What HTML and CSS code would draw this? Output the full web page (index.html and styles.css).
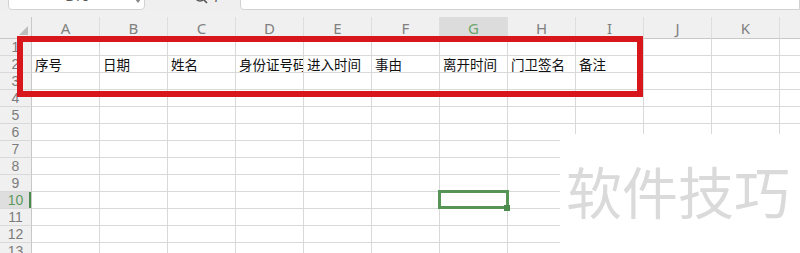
FILE: index.html
```html
<!DOCTYPE html>
<html lang="zh-CN">
<head>
  <meta charset="UTF-8">
  <meta name="viewport" content="width=device-width, initial-scale=1.0">
  <title>门卫登记表</title>
  <link rel="stylesheet" href="styles.css">
</head>
<body>
  <div class="toolbar">
    <div class="namebox">
      G10
      <svg class="caret" width="6" height="4" viewBox="0 0 6 4"><path d="M0 0 L6 0 L3 4 Z" fill="#888"/></svg>
    </div>
    <div class="fx-tools">
      <svg class="search" width="16" height="16" viewBox="0 0 16 16">
        <circle cx="7" cy="6" r="5" fill="none" stroke="#555" stroke-width="1.4"/>
        <path d="M10.5 9.5 L14 13" stroke="#555" stroke-width="1.6"/>
      </svg>
      <span class="fx">fx</span>
    </div>
    <div class="formula"></div>
  </div>

  <div class="sheet">
    <div class="row head">
      <div class="rh corner"><span class="tri"></span></div>
      <div class="ch">A</div>
      <div class="ch">B</div>
      <div class="ch">C</div>
      <div class="ch">D</div>
      <div class="ch">E</div>
      <div class="ch">F</div>
      <div class="ch active">G</div>
      <div class="ch">H</div>
      <div class="ch">I</div>
      <div class="ch">J</div>
      <div class="ch">K</div>
      <div class="ch"></div>
    </div>
    <div id="rows"></div>

    <div class="mark-box"></div>
    <div class="blank">
      <span class="watermark">软件技巧</span>
    </div>
  </div>

  <script>
    const headers = ['序号', '日期', '姓名', '身份证号码', '进入时间', '事由', '离开时间', '门卫签名', '备注'];
    const rows = document.getElementById('rows');
    for (let r = 1; r <= 13; r++) {
      const row = document.createElement('div');
      row.className = 'row';
      const rh = document.createElement('div');
      rh.className = r === 10 ? 'rh active' : 'rh';
      rh.textContent = r;
      row.appendChild(rh);
      for (let c = 0; c < 12; c++) {
        const cell = document.createElement('div');
        cell.className = 'cell';
        if (r === 2 && headers[c]) cell.textContent = headers[c];
        if (r === 10 && c === 6) cell.className = 'cell selected';
        row.appendChild(cell);
      }
      rows.appendChild(row);
    }
  </script>
</body>
</html>
```

FILE: styles.css
```css
body {
  margin: 0;
  padding: 0;
  background-color: #fff;
  font-family: "Noto Sans", "Noto Sans CJK SC", sans-serif;
  overflow: hidden;
}

/* formula bar, only its bottom edge is visible */
.toolbar {
  height: 10px;
  display: flex;
  align-items: flex-end;
  background-color: #efefef;
  overflow: hidden;
}

.namebox {
  position: relative;
  flex: none;
  width: 137px;
  height: 24px;
  margin-left: 8px;
  box-sizing: border-box;
  background-color: #fff;
  border: 1px solid #d2d2d2;
  border-radius: 4px;
  text-align: center;
  font-size: 14px;
  line-height: 18px;
  color: #555;
}

.namebox .caret {
  position: absolute;
  right: 3px;
  top: 12px;
}

.fx-tools {
  flex: none;
  width: 95px;
  height: 24px;
  display: flex;
  align-items: flex-start;
  gap: 6px;
  padding-left: 48px;
  box-sizing: border-box;
}

.search {
  margin-top: 4px;
}

.fx {
  font-family: "Liberation Serif", serif;
  font-style: italic;
  font-size: 15px;
  line-height: 16px;
  color: #555;
}

.formula {
  flex: 1;
  height: 24px;
  box-sizing: border-box;
  background-color: #fff;
  border: 1px solid #d2d2d2;
  border-radius: 4px 0 0 4px;
}

/* sheet grid */
.sheet {
  position: relative;
  padding-top: 7px;
  background-color: #f0f0f0;
}

.row {
  display: flex;
  height: 17px;
}

.row.head {
  height: 22px;
}

.rh,
.ch,
.cell {
  flex: none;
  box-sizing: border-box;
  border-right: 1px solid #d9d9d9;
  border-bottom: 1px solid #d9d9d9;
}

.rh {
  width: 32px;
  background-color: #f0f0f0;
  text-align: center;
  font-family: "Liberation Sans", sans-serif;
  font-size: 14px;
  line-height: 17px;
  color: #7c7c7c;
  border-right-color: #c8c8c8;
}

.rh.active {
  background-color: #dedede;
  color: #5f9a5f;
  box-shadow: inset -2px 0 0 #4b8b4b;
}

.rh.corner {
  position: relative;
  border-bottom-color: #c8c8c8;
}

.tri {
  position: absolute;
  right: 3px;
  bottom: 3px;
  width: 0;
  height: 0;
  border-left: 9px solid transparent;
  border-bottom: 9px solid #bdbdbd;
}

.ch {
  width: 68px;
  background-color: #f0f0f0;
  border-right-color: #dedede;
  border-bottom-color: #c8c8c8;
  text-align: center;
  font-size: 15px;
  line-height: 22px;
  color: #808080;
}

.ch.active {
  background-color: #dcdcdc;
  color: #6aa56a;
}

.cell {
  width: 68px;
  padding-left: 3px;
  background-color: #fff;
  white-space: nowrap;
  overflow: hidden;
  font-family: "Noto Sans CJK SC", sans-serif;
  font-size: 13.5px;
  line-height: 17px;
  color: #111;
}

.cell.selected {
  position: relative;
  overflow: visible;
}

.cell.selected::after {
  content: "";
  position: absolute;
  left: -2px;
  top: -2px;
  right: -2px;
  bottom: -1px;
  border: 3px solid #579557;
}

.cell.selected::before {
  content: "";
  position: absolute;
  right: -3px;
  bottom: -3px;
  width: 6px;
  height: 6px;
  background-color: #4b8b4b;
  z-index: 1;
}

/* red highlight around the header row */
.mark-box {
  position: absolute;
  left: 17px;
  top: 26px;
  width: 626px;
  height: 61px;
  box-sizing: border-box;
  border: 6px solid #d8171c;
}

/* pasted blank area with watermark */
.blank {
  position: absolute;
  left: 560px;
  top: 124px;
  right: 0;
  bottom: 0;
  background-color: #fff;
}

.watermark {
  position: absolute;
  left: 6px;
  top: 28px;
  font-family: "Noto Sans CJK SC", sans-serif;
  font-size: 56px;
  line-height: 56px;
  color: #dadada;
  white-space: nowrap;
}
```
